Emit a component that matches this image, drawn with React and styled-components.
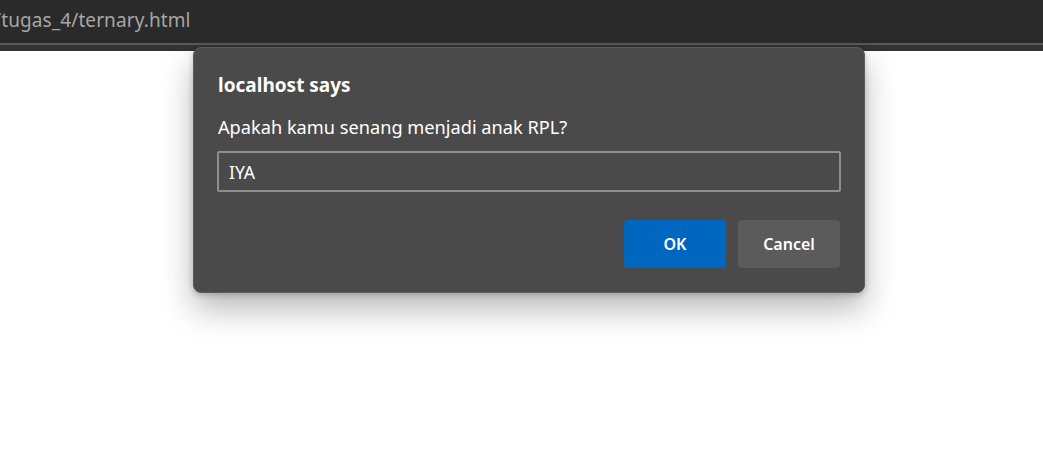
import React, { useState } from "react"
import styled, { createGlobalStyle } from "styled-components"

const GlobalStyle = createGlobalStyle`
  html, body {
    margin: 0;
    padding: 0;
    background: #ffffff;
    font-family: "Noto Sans", "Open Sans", sans-serif;
  }
`

const App = () => {
  const [answer, setAnswer] = useState("IYA")

  return (
    <Wrapper>
      <GlobalStyle />
      <AddressBar>
        <span className="url">/tugas_4/ternary.html</span>
      </AddressBar>
      <Divider />
      <Dialog>
        <Title>localhost says</Title>
        <Message>Apakah kamu senang menjadi anak RPL?</Message>
        <Input value={answer} onChange={(e) => setAnswer(e.target.value)} />
        <Actions>
          <Button primary>OK</Button>
          <Button>Cancel</Button>
        </Actions>
      </Dialog>
    </Wrapper>
  )
}

const Wrapper = styled.div`
  position: relative;
  width: 1043px;
  height: 458px;
  overflow: hidden;
  background: #ffffff;
`

const AddressBar = styled.div`
  height: 43px;
  background: #2a2a2a;
  display: flex;
  align-items: center;
  overflow: hidden;

  .url {
    margin-left: -6px;
    margin-top: -3px;
    font-size: 19px;
    color: #a6a6a6;
    letter-spacing: 0.1px;
    white-space: nowrap;
  }
`

const Divider = styled.div`
  height: 2px;
  background: #595959;
  border-bottom: 6px solid #333333;
`

const Dialog = styled.div`
  position: absolute;
  left: 193px;
  top: 47px;
  width: 672px;
  box-sizing: border-box;
  height: 246px;
  padding: 23px 24px 24px 24px;
  background: #4a4a4a;
  border: 1px solid #5c5c5c;
  border-radius: 8px;
  box-shadow: 0 16px 32px rgba(0, 0, 0, 0.28), 0 2px 6px rgba(0, 0, 0, 0.2);
  display: flex;
  flex-direction: column;
`

const Title = styled.div`
  font-size: 19px;
  font-weight: 700;
  color: #ffffff;
  line-height: 28px;
  margin-bottom: 15px;
`

const Message = styled.div`
  font-size: 18.2px;
  color: #ffffff;
  line-height: 26px;
  margin-bottom: 11px;
`

const Input = styled.input`
  box-sizing: border-box;
  width: 624px;
  height: 41px;
  margin-left: -1px;
  padding: 0 10px;
  border: 2px solid #8e8e90;
  border-radius: 2px;
  background: #4a4a4a;
  color: #ffffff;
  font-family: inherit;
  font-size: 17.6px;
  outline: none;
`

const Actions = styled.div`
  display: flex;
  justify-content: flex-end;
  gap: 12px;
  margin-top: 28px;
`

const Button = styled.button`
  width: 102px;
  height: 48px;
  border: none;
  border-radius: 4px;
  background: ${(props) => (props.primary ? "#0067c0" : "#5b5b5b")};
  color: #ffffff;
  font-family: inherit;
  font-size: 16px;
  font-weight: 600;
  cursor: pointer;
`

export default App
